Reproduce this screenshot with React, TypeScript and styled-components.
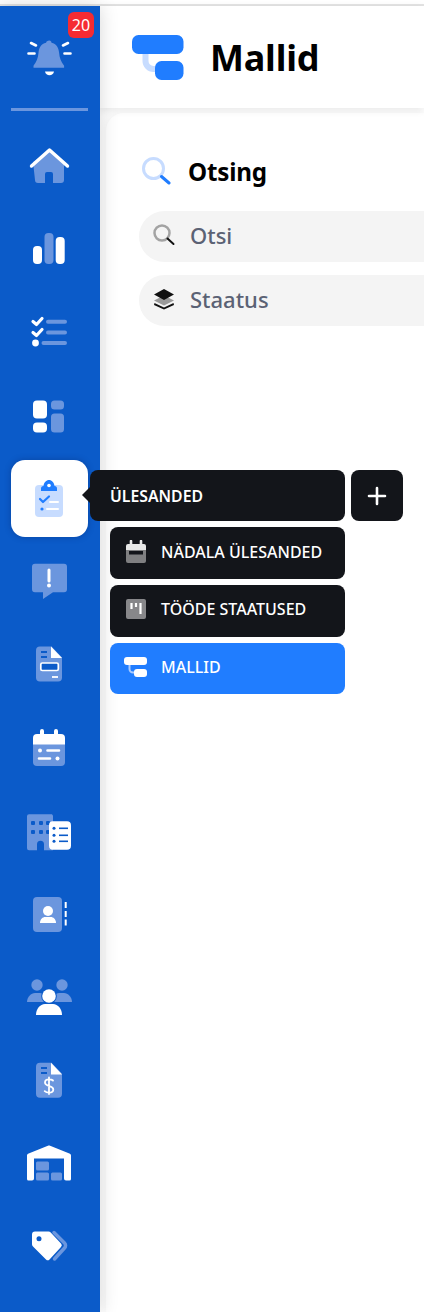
import React from 'react';
import styled, { createGlobalStyle } from 'styled-components';

const LIGHT = '#6b96de';
const DARK = '#0b5bc9';
const BLUE = '#207dff';
const PALE = '#c7dcff';

const GlobalStyle = createGlobalStyle`
  html, body {
    margin: 0;
    padding: 0;
    background: #fff;
    overflow: hidden;
  }
  * {
    box-sizing: border-box;
  }
`;

const Page = styled.div`
  width: 424px;
  height: 1312px;
  overflow: hidden;
  display: flex;
  flex-direction: column;
  padding-top: 4px;
  font-family: 'Noto Sans', 'Open Sans', sans-serif;
`;

const TopRule = styled.div`
  height: 2px;
  flex: none;
  background: #e4e4e4;
`;

const Body = styled.div`
  flex: 1;
  display: flex;
  min-height: 0;
`;

const Sidebar = styled.nav`
  position: relative;
  z-index: 3;
  flex: none;
  width: 100px;
  padding: 12.5px 0 0 11px;
  background: ${DARK};
  box-shadow: 0 0 18px rgba(0, 0, 0, 0.16);
`;

const NavList = styled.div`
  display: flex;
  flex-direction: column;
  gap: 6.2px;
`;

const NavItem = styled.div<{ $active?: boolean }>`
  position: relative;
  width: 77px;
  height: 77px;
  display: flex;
  align-items: center;
  justify-content: center;
  border-radius: 14px;
  background: ${(p) => (p.$active ? '#fff' : 'transparent')};
  box-shadow: ${(p) => (p.$active ? '0 0 6px rgba(0, 30, 90, 0.35)' : 'none')};
`;

const Badge = styled.span`
  position: absolute;
  top: -7px;
  left: 57px;
  width: 26px;
  height: 26px;
  border-radius: 6px;
  background: #f52b32;
  color: #fff;
  font-size: 16px;
  line-height: 26px;
  text-align: center;
`;

const Divider = styled.div`
  width: 77px;
  height: 3px;
  margin: 12.5px 0 16px;
  background: ${LIGHT};
`;

const Flyout = styled.div`
  position: absolute;
  top: 10px;
  left: 79px;
  width: 313px;
  display: flex;
  flex-direction: column;
  gap: 6.2px;
`;

const FlyoutHead = styled.div`
  display: flex;
  gap: 6px;
`;

const FlyoutTitle = styled.div`
  position: relative;
  width: 255px;
  height: 51.5px;
  padding-left: 20px;
  display: flex;
  align-items: center;
  border-radius: 8px;
  background: #13151a;
  color: #fff;
  font-size: 15.8px;
  font-weight: 600;
  &::before {
    content: '';
    position: absolute;
    left: -8px;
    top: 17px;
    border-style: solid;
    border-width: 8px 8px 8px 0;
    border-color: transparent #13151a transparent transparent;
  }
`;

const AddButton = styled.button`
  width: 52px;
  height: 51.5px;
  padding: 0;
  display: flex;
  align-items: center;
  justify-content: center;
  border: none;
  border-radius: 8px;
  background: #13151a;
`;

const MenuItem = styled.div<{ $current?: boolean }>`
  width: 235px;
  height: 51.5px;
  margin-left: 20px;
  padding: 0 0 3px 14px;
  display: flex;
  align-items: center;
  gap: 14px;
  border-radius: 8px;
  background: ${(p) => (p.$current ? BLUE : '#13151a')};
  color: #fff;
  font-size: 16px;
  font-weight: 500;
  white-space: nowrap;
`;

const MenuIconSlot = styled.span`
  width: 23px;
  display: flex;
  justify-content: center;
  flex: none;
`;

const Main = styled.main`
  flex: 1;
  min-width: 0;
  display: flex;
  flex-direction: column;
`;

const Header = styled.header`
  position: relative;
  z-index: 2;
  flex: none;
  height: 102px;
  padding: 1px 0 0 32px;
  display: flex;
  align-items: center;
  gap: 26px;
  background: #fff;
  box-shadow: 0 2px 8px rgba(0, 0, 0, 0.09);
`;

const Title = styled.h1`
  margin: 0;
  color: #000;
  font-size: 36px;
  font-weight: 700;
  letter-spacing: -0.2px;
`;

const Panel = styled.section`
  flex: 1;
  margin: 5px 0 0 6px;
  padding: 38px 0 0 33px;
  border-radius: 18px 0 0 0;
  background: #fff;
  box-shadow: 0 0 10px rgba(0, 0, 0, 0.05);
`;

const PanelHeading = styled.div`
  height: 40px;
  padding-left: 2px;
  display: flex;
  align-items: center;
  gap: 17px;
  margin-bottom: 20px;
  color: #000;
  font-size: 24.2px;
  font-weight: 700;
  letter-spacing: -0.2px;
`;

const Fields = styled.div`
  display: flex;
  flex-direction: column;
  gap: 13px;
`;

const Field = styled.div`
  width: 420px;
  height: 51px;
  padding: 0 0 3px 14px;
  display: flex;
  align-items: center;
  gap: 15px;
  border-radius: 26px;
  background: #f4f4f4;
  color: #5b6274;
  font-size: 22px;
  font-weight: 500;
`;

const HomeIcon = () => (
  <svg width="47" height="47" viewBox="0 0 47 47">
    <path d="M7 20 23.5 9 38 20v18a3 3 0 0 1-3 3h-8V32a2 2 0 0 0-2-2h-4a2 2 0 0 0-2 2v9h-7a3 3 0 0 1-3-3z" fill={LIGHT} />
    <path d="M5.5 24 23.5 8 41.5 24" fill="none" stroke="#fff" strokeWidth="3.4" strokeLinecap="round" strokeLinejoin="round" />
  </svg>
);

const BellIcon = () => (
  <svg width="47" height="47" viewBox="0 0 47 47">
    <path d="M23.5 6.5c1.2 0 1.8 1 2 2.2 5 1.2 7.2 5 7.6 10 .4 5.300 2 9 5 13v2H7.500v-2c3-4 4.600-7.700 5-13 .4-5 2.600-8.800 7.600-10 .2-1.200 1.200-2.200 3.400-2.200z" fill={LIGHT} />
    <path d="M19 37.500h9c-.5 2.500-2.300 3.700-4.500 3.700S19.500 40 19 37.500z" fill="#fff" />
    <path d="M5 9 10 11.500M2.500 19.500H8.500M42 9 37 11.500M44.500 19.500H38.500" stroke="#fff" strokeWidth="2.600" strokeLinecap="round" />
  </svg>
);

const ChartIcon = () => (
  <svg width="47" height="47" viewBox="0 0 47 47">
    <rect x="7" y="21" width="9" height="18" rx="4" fill="#fff" />
    <rect x="18.500" y="8" width="9" height="31" rx="4" fill={LIGHT} />
    <rect x="29.700" y="12" width="9" height="27" rx="4" fill="#fff" />
  </svg>
);

const TasksIcon = () => (
  <svg width="47" height="47" viewBox="0 0 47 47">
    <path d="M7 13.500 10.500 16.500 16 10.500M7 24.500 10.500 27.500 16 21.500" fill="none" stroke="#fff" strokeWidth="3.200" strokeLinecap="round" strokeLinejoin="round" />
    <circle cx="9.500" cy="35" r="3.400" fill="#fff" />
    <path d="M22 13.700H39M22 24.500H39M17.500 35H39" stroke={LIGHT} strokeWidth="4" strokeLinecap="round" />
  </svg>
);

const BoardsIcon = () => (
  <svg width="47" height="47" viewBox="0 0 47 47">
    <rect x="7" y="8.500" width="14" height="18" rx="4" fill="#fff" />
    <rect x="7" y="30.500" width="14" height="10" rx="4" fill="#fff" />
    <rect x="25" y="8.500" width="13" height="9" rx="3.500" fill={LIGHT} />
    <rect x="25" y="21.500" width="13" height="19" rx="3.500" fill={LIGHT} />
  </svg>
);

const ClipboardIcon = () => (
  <svg width="47" height="47" viewBox="0 0 47 47">
    <rect x="9" y="10" width="28" height="32" rx="4" fill={PALE} />
    <path d="M15 16v-2.500a2.500 2.500 0 0 1 2.500-2.500c.4-3.500 2.800-6 5.500-6s5.100 2.500 5.500 6a2.500 2.500 0 0 1 2.500 2.500V16z" fill={BLUE} />
    <circle cx="23" cy="10.500" r="1.800" fill="#fff" />
    <path d="M14 24 17 27 23 21.500" fill="none" stroke={BLUE} strokeWidth="2.200" strokeLinecap="round" strokeLinejoin="round" />
    <circle cx="16" cy="34" r="1.600" fill={BLUE} />
    <path d="M24 27H32M21 34H32" stroke="#fff" strokeWidth="2" strokeLinecap="round" />
  </svg>
);

const AlertIcon = () => (
  <svg width="47" height="47" viewBox="0 0 47 47">
    <path d="M9 5.800h29a3 3 0 0 1 3 3v22.500a3 3 0 0 1-3 3H27L17 41V34.300H9a3 3 0 0 1-3-3V8.800a3 3 0 0 1 3-3z" fill={LIGHT} />
    <path d="M23 12V23" stroke="#fff" strokeWidth="3" strokeLinecap="round" />
    <circle cx="23" cy="27.500" r="2" fill="#fff" />
  </svg>
);

const QuoteIcon = () => (
  <svg width="47" height="47" viewBox="0 0 47 47">
    <path d="M14 5.500h11.500L36 16.500V36.500a4 4 0 0 1-4 4H14a4 4 0 0 1-4-4v-27a4 4 0 0 1 4-4z" fill={LIGHT} />
    <path d="M25 5.500 36 17H25z" fill="#fff" />
    <path d="M15 11H21M15 16H21" stroke={DARK} strokeWidth="2" />
    <rect x="14.800" y="22" width="17.500" height="7.500" rx="1.500" fill={DARK} stroke="#fff" strokeWidth="1.700" />
    <path d="M26 36H32" stroke="#fff" strokeWidth="1.800" />
  </svg>
);

const CalendarIcon = () => (
  <svg width="47" height="47" viewBox="0 0 47 47">
    <path d="M7 14a4 4 0 0 1 4-4h24a4 4 0 0 1 4 4v7H7z" fill="#fff" />
    <path d="M7 20.500h32V38a4 4 0 0 1-4 4H11a4 4 0 0 1-4-4z" fill={LIGHT} />
    <path d="M16 7V11M30 7V11" stroke="#fff" strokeWidth="4" strokeLinecap="round" />
    <circle cx="14" cy="26.500" r="2" fill="#fff" />
    <path d="M21.500 26.500H33M13 34.500H24" stroke="#fff" strokeWidth="2.600" strokeLinecap="round" />
    <circle cx="31.500" cy="34.500" r="2" fill="#fff" />
  </svg>
);

const BuildingListIcon = () => (
  <svg width="47" height="47" viewBox="0 0 47 47">
    <path d="M3 6.300h23l1 1.500v34.500H18v-6a3.500 3.500 0 0 0-7 0v6H3a2 2 0 0 1-2-2V8.300a2 2 0 0 1 2-2z" fill={LIGHT} />
    {[5, 13, 20].map((x) => (
      <React.Fragment key={x}>
        <rect x={x} y="13" width="4" height="4" rx="1" fill={DARK} />
        <rect x={x} y="22" width="4" height="4" rx="1" fill={DARK} />
      </React.Fragment>
    ))}
    <rect x="23" y="13.300" width="22" height="28.500" rx="4" fill="#fff" />
    {[20.300, 27.300, 33.300].map((y) => (
      <React.Fragment key={y}>
        <circle cx="28" cy={y} r="1.500" fill={DARK} />
        <path d={`M33 ${y}H42`} stroke={DARK} strokeWidth="1.600" />
      </React.Fragment>
    ))}
  </svg>
);

const ContactsIcon = () => (
  <svg width="47" height="47" viewBox="0 0 47 47">
    <rect x="7" y="6" width="29" height="35" rx="4" fill={LIGHT} />
    <circle cx="22" cy="20" r="5" fill="#fff" />
    <path d="M14 32c0-4 3-6 5-6h6c2 0 5 2 5 6z" fill="#fff" />
    <path d="M39.700 11v6M39.700 20v6M39.700 28.500v6" stroke="#fff" strokeWidth="2" />
  </svg>
);

const PeopleIcon = () => (
  <svg width="47" height="47" viewBox="0 0 47 47">
    <circle cx="11" cy="11" r="5.700" fill={LIGHT} />
    <circle cx="36" cy="11" r="5.700" fill={LIGHT} />
    <path d="M1 28c0-5 4-9 8-9h5c3 0 6 3 7 9z" fill={LIGHT} />
    <path d="M46 28c0-5-4-9-8-9h-5c-3 0-6 3-7 9z" fill={LIGHT} />
    <circle cx="23" cy="22" r="7.800" fill={DARK} />
    <path d="M8 43c0-8 5-13 11-13h8c6 0 11 5 11 13z" fill={DARK} />
    <circle cx="23" cy="22" r="6.800" fill="#fff" />
    <path d="M10 41c0-6 4-11 9-11h8c5 0 9 5 9 11z" fill="#fff" />
  </svg>
);

const InvoiceIcon = () => (
  <svg width="47" height="47" viewBox="0 0 47 47">
    <path d="M14 5.700h11.500L36 16.700V36.700a4 4 0 0 1-4 4H14a4 4 0 0 1-4-4v-27a4 4 0 0 1 4-4z" fill={LIGHT} />
    <path d="M25 5.700 36 17.500H25z" fill="#fff" />
    <path d="M15 11H21M15 16H21" stroke={DARK} strokeWidth="2" />
    <path d="M23 20.500v16.500M27 23.500c-1-1-2.500-1.200-4-1.200-2.200 0-4 1.200-4 3.300 0 4.500 8.300 2.500 8.300 6.800 0 2-1.800 3.200-4.300 3.200-1.500 0-3.200-.4-4.300-1.400" fill="none" stroke="#fff" strokeWidth="1.800" strokeLinecap="round" />
  </svg>
);

const WarehouseIcon = () => (
  <svg width="47" height="47" viewBox="0 0 47 47">
    <path d="M1 15.500a2 2 0 0 1 1-1.700L22.500 5.500h1L44 13.800a2 2 0 0 1 1 1.700V39a1.500 1.500 0 0 1-1.500 1.500H40a2 2 0 0 1-2-2V18.500H8V38.500a2 2 0 0 1-2 2H2.500A1.500 1.500 0 0 1 1 39z" fill="#fff" />
    <rect x="10" y="21.500" width="13" height="9" rx="1.500" fill={LIGHT} />
    <rect x="10" y="32.500" width="13" height="8" rx="1.500" fill={LIGHT} />
    <rect x="25" y="32.500" width="11" height="8" rx="1.500" fill={LIGHT} />
  </svg>
);

const TagIcon = () => (
  <svg width="47" height="47" viewBox="0 0 47 47">
    <path d="M28 9.500 38.500 20a3.500 3.500 0 0 1 0 5L28.500 36" fill="none" stroke={LIGHT} strokeWidth="3.500" strokeLinecap="round" />
    <path d="M9 8.500h13.500a3 3 0 0 1 2.200 1L35 20.500a2.500 2.500 0 0 1 0 3.500L23.500 36.500a2.500 2.500 0 0 1-3.500 0L7 23.500a3 3 0 0 1-1-2.200V11.500a3 3 0 0 1 3-3z" fill="#fff" />
    <circle cx="13" cy="15.800" r="2.500" fill={DARK} />
  </svg>
);

const LogoIcon = () => (
  <svg width="52" height="45" viewBox="0 0 52 45">
    <path d="M13.500 18v8a8 8 0 0 0 8 8h4" fill="none" stroke={PALE} strokeWidth="6" />
    <rect x="0" y="0" width="51.500" height="19" rx="6.500" fill={BLUE} />
    <rect x="23" y="26" width="28.500" height="19" rx="6.500" fill={BLUE} />
  </svg>
);

const SearchBigIcon = () => (
  <svg width="30" height="30" viewBox="0 0 30 30">
    <circle cx="12.500" cy="12.500" r="10" fill="none" stroke={PALE} strokeWidth="3" />
    <path d="M20.500 20.500 28 27" stroke={BLUE} strokeWidth="3" strokeLinecap="round" />
  </svg>
);

const SearchSmallIcon = () => (
  <svg width="22" height="22" viewBox="0 0 22 22">
    <circle cx="9" cy="9" r="7.500" fill="none" stroke="#a3a3a3" strokeWidth="2.500" />
    <path d="M14.500 14.500 20.500 20" stroke="#111" strokeWidth="2" strokeLinecap="round" />
  </svg>
);

const LayersIcon = () => (
  <svg width="22" height="22" viewBox="0 0 22 22">
    <path d="M11 7.500 21 12.500 11 17.500 1 12.500z" fill="#9a9a9a" />
    <path d="M1.500 15 11 19.500 20.500 15 21 17 11 21.500 1 17z" fill="#111" />
    <path d="M11 1 21 6.500 11 12 1 6.500z" fill="#111" />
  </svg>
);

const PlusIcon = () => (
  <svg width="20" height="20" viewBox="0 0 20 20">
    <path d="M10 2V18M2 10H18" stroke="#fff" strokeWidth="2.600" strokeLinecap="round" />
  </svg>
);

const WeekIcon = () => (
  <svg width="20" height="23" viewBox="0 0 20 23">
    <path d="M0 6a2 2 0 0 1 2-2h16a2 2 0 0 1 2 2v5H0z" fill="#e8e8e8" />
    <path d="M5 1V5M15 1V5" stroke="#e8e8e8" strokeWidth="2.600" strokeLinecap="round" />
    <path d="M0 10h20v11a2 2 0 0 1-2 2H2a2 2 0 0 1-2-2z" fill="#7f7f81" />
    <rect x="3" y="11" width="14" height="3.500" fill="#13151a" />
  </svg>
);

const KanbanIcon = () => (
  <svg width="20" height="20" viewBox="0 0 20 20">
    <rect width="20" height="20" rx="2" fill="#87878a" />
    <path d="M5.500 4v6M10 4v4M14.500 4v11" stroke="#fff" strokeWidth="2.200" />
  </svg>
);

const TemplateIcon = () => (
  <svg width="23" height="20" viewBox="0 0 23 20">
    <path d="M5.500 7v5a3.500 3.500 0 0 0 3.500 3.500h2" fill="none" stroke="#a9cbff" strokeWidth="2" />
    <rect width="23" height="8" rx="3" fill="#fff" />
    <rect x="10" y="12" width="13" height="8" rx="3" fill="#fff" />
  </svg>
);

const App = () => {
  return (
    <Page>
      <GlobalStyle />
      <TopRule />
      <Body>
        <Sidebar>
          <NavItem>
            <BellIcon />
            <Badge>20</Badge>
          </NavItem>
          <Divider />
          <NavList>
            <NavItem><HomeIcon /></NavItem>
            <NavItem><ChartIcon /></NavItem>
            <NavItem><TasksIcon /></NavItem>
            <NavItem><BoardsIcon /></NavItem>
            <NavItem $active>
              <ClipboardIcon />
              <Flyout>
                <FlyoutHead>
                  <FlyoutTitle>ÜLESANDED</FlyoutTitle>
                  <AddButton><PlusIcon /></AddButton>
                </FlyoutHead>
                <MenuItem>
                  <MenuIconSlot><WeekIcon /></MenuIconSlot>
                  NÄDALA ÜLESANDED
                </MenuItem>
                <MenuItem>
                  <MenuIconSlot><KanbanIcon /></MenuIconSlot>
                  TÖÖDE STAATUSED
                </MenuItem>
                <MenuItem $current>
                  <MenuIconSlot><TemplateIcon /></MenuIconSlot>
                  MALLID
                </MenuItem>
              </Flyout>
            </NavItem>
            <NavItem><AlertIcon /></NavItem>
            <NavItem><QuoteIcon /></NavItem>
            <NavItem><CalendarIcon /></NavItem>
            <NavItem><BuildingListIcon /></NavItem>
            <NavItem><ContactsIcon /></NavItem>
            <NavItem><PeopleIcon /></NavItem>
            <NavItem><InvoiceIcon /></NavItem>
            <NavItem><WarehouseIcon /></NavItem>
            <NavItem><TagIcon /></NavItem>
          </NavList>
        </Sidebar>
        <Main>
          <Header>
            <LogoIcon />
            <Title>Mallid</Title>
          </Header>
          <Panel>
            <PanelHeading>
              <SearchBigIcon />
              Otsing
            </PanelHeading>
            <Fields>
              <Field>
                <SearchSmallIcon />
                Otsi
              </Field>
              <Field>
                <LayersIcon />
                Staatus
              </Field>
            </Fields>
          </Panel>
        </Main>
      </Body>
    </Page>
  );
};

export default App;
